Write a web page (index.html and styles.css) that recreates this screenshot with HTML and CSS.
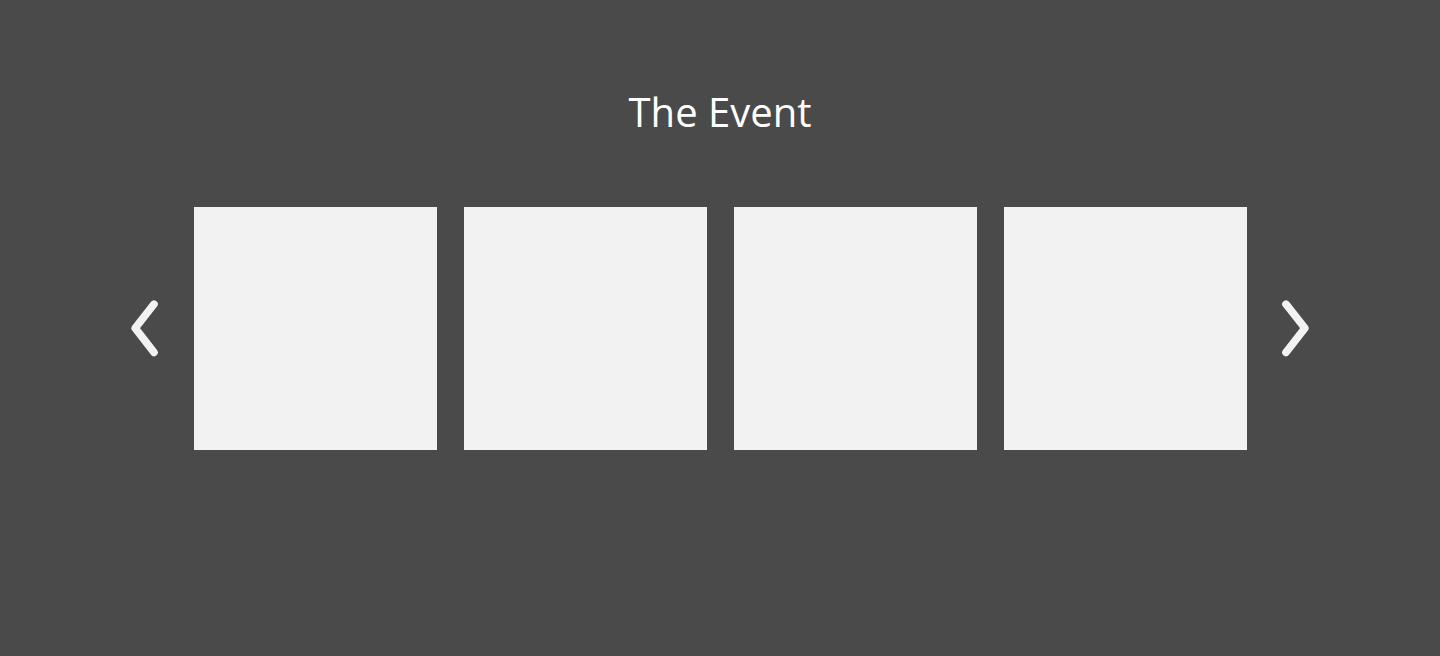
FILE: index.html
```html
<!DOCTYPE html>
<html lang="en">
<head>
<meta charset="utf-8">
<meta name="viewport" content="width=device-width, initial-scale=1">
<title>The Event</title>
<link rel="stylesheet" href="styles.css">
</head>
<body>
<section class="event" aria-labelledby="event-title">
  <h2 class="event-title" id="event-title">The Event</h2>
  <div class="carousel">
    <button class="arrow" type="button" aria-label="Previous">
      <svg class="arrow-icon" viewBox="0 0 28 58" aria-hidden="true"><path d="M23 4.2 L4.2 28.2 L23 52.4"/></svg>
    </button>
    <ul class="slides">
      <li class="slide"></li>
      <li class="slide"></li>
      <li class="slide"></li>
      <li class="slide"></li>
    </ul>
    <button class="arrow" type="button" aria-label="Next">
      <svg class="arrow-icon" viewBox="0 0 28 58" aria-hidden="true"><path d="M4 4.2 L22.9 28.2 L4 52.4"/></svg>
    </button>
  </div>
</section>
</body>
</html>
```
FILE: styles.css
```css
* {
  box-sizing: border-box;
}

body {
  margin: 0;
  background: #4a4a4a;
  color: #ffffff;
  font-family: "Open Sans", sans-serif;
}

.event {
  min-height: 100vh;
  padding: 84px 24px;
}

.event-title {
  margin: 0 0 67px;
  font-size: 40px;
  line-height: 56px;
  font-weight: 400;
  text-align: center;
}

.carousel {
  display: flex;
  align-items: center;
  justify-content: center;
  gap: 35px;
}

.slides {
  display: grid;
  flex: 0 1 1053px;
  grid-template-columns: repeat(4, 1fr);
  gap: 27px;
  margin: 0;
  padding: 0;
  list-style: none;
}

.slide {
  aspect-ratio: 1;
  background: #f2f2f2;
}

.arrow {
  flex: none;
  padding: 0;
  border: 0;
  background: none;
  cursor: pointer;
}

.arrow-icon {
  display: block;
  width: 28px;
  height: 58px;
  fill: none;
  stroke: #f2f2f2;
  stroke-width: 7.6;
  stroke-linecap: round;
  stroke-linejoin: round;
}
```
